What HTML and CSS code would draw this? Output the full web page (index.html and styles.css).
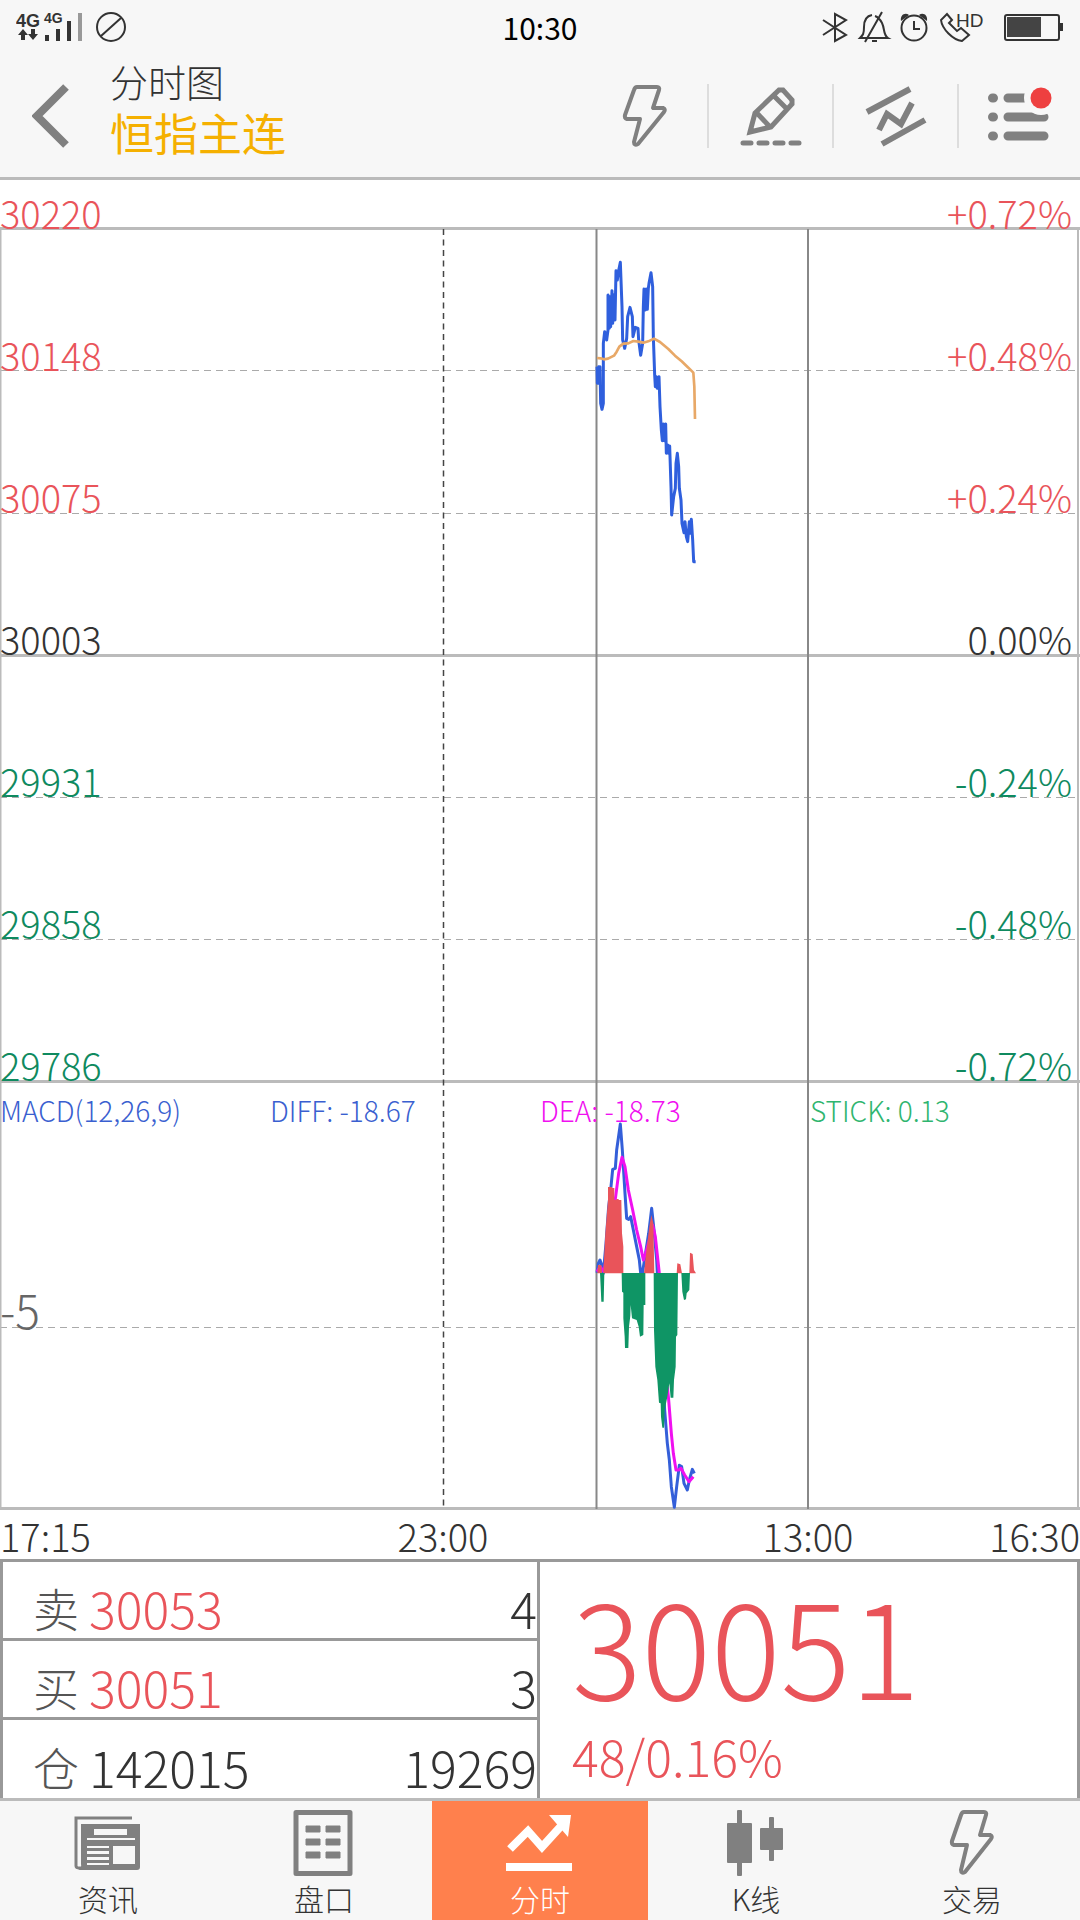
FILE: index.html
```html
<!DOCTYPE html>
<html lang="zh-CN">
<head>
    <meta charset="UTF-8">
    <meta name="viewport" content="width=device-width, initial-scale=1.0">
    <title>分时图</title>
    <link rel="stylesheet" href="styles.css">
</head>
<body>
    <div class="status">
        <svg class="signal" width="116" height="34" viewBox="0 0 116 34">
            <text class="net1" x="0" y="17">4G</text>
            <text class="net2" x="28" y="13">4G</text>
            <path d="M7 19l5 6h-3v5h-4v-5h-3zM17 30l-5-6h3v-5h4v5h3z" fill="#333"/>
            <path d="M29 25h4v6h-4zM40 19h4v12h-4zM51 11h4v20h-4z" fill="#333"/>
            <path d="M62 3h4v28h-4z" fill="#999"/>
            <circle cx="95" cy="17" r="14" fill="none" stroke="#333" stroke-width="2"/>
            <path d="M105 8L85 26" stroke="#333" stroke-width="2"/>
        </svg>
        <span class="clock">10:30</span>
        <svg class="sysicons" width="244" height="34" viewBox="0 0 244 34" fill="none" stroke="#333" stroke-width="2">
            <path d="M3 10l23 15-11 6V4l11 6L3 25"/>
            <path d="M42 28h26c-5-3-3-9-6-15-2-4-4-6-7-7M52 5c-6 1-8 6-8 12 0 7-1 8-4 11h6M62 2L45 32M52 31h5"/>
            <circle cx="94" cy="18" r="12.500"/>
            <path d="M94 11v8h6"/>
            <path d="M81 11c-1-6 4-9 8-6zM107 11c1-6-4-9-8-6z" fill="#333" stroke="none"/>
            <path d="M127 4l-6 6c1 9 12 20 21 21l7-6-8-7-4 3-8-8 3-3z"/>
            <text class="hd" x="136" y="17">HD</text>
            <rect x="185" y="5" width="54" height="25" rx="2"/>
            <path d="M187 7h34v20h-34z" fill="#444" stroke="none"/>
            <path d="M240 13h3v8h-3z" fill="#333" stroke="none"/>
        </svg>
    </div>

    <div class="header">
        <button class="back" aria-label="返回">
            <svg width="40" height="64" viewBox="0 0 40 64"><path d="M34 3L5 32l29 29" fill="none" stroke="#808080" stroke-width="8"/></svg>
        </button>
        <div class="title">
            <h1>分时图</h1>
            <p>恒指主连</p>
        </div>
        <div class="tools">
            <button aria-label="闪电下单">
                <svg width="64" height="64" viewBox="0 0 64 64"><path d="M24 3h20q3 0 2 3l-6 18h10q3 1 1 4L25 60q-4 2-4-2l6-23H14q-3-1-2-4l9-25q1-3 3-3z" fill="none" stroke="#808080" stroke-width="4" stroke-linejoin="round"/></svg>
            </button>
            <button aria-label="画线">
                <svg width="64" height="64" viewBox="0 0 64 64">
                    <path d="M11 48l5-19L40 6h4l9 10v4L32 43zM35 12l14 14M17 28l14 15" fill="none" stroke="#808080" stroke-width="5"/>
                    <path d="M4 59h8M20 59h8M36 59h8M52 59h8" stroke="#808080" stroke-width="5" stroke-linecap="round"/>
                </svg>
            </button>
            <button aria-label="指标">
                <svg width="64" height="64" viewBox="0 0 64 64"><path d="M3 28L46 5M18 60l43-24M15 46l8-16 14 10L48 19" fill="none" stroke="#808080" stroke-width="6"/></svg>
            </button>
            <button aria-label="菜单">
                <svg width="64" height="64" viewBox="0 0 64 64">
                    <path d="M4.500 14h1M4.500 33h1M4.500 52h1M20 14h16M20 33h36M20 52h36" stroke="#808080" stroke-width="9" stroke-linecap="round"/>
                    <circle cx="53" cy="14" r="17" fill="#f7f7f7"/>
                    <circle cx="53" cy="14" r="10.500" fill="#ee4040"/>
                </svg>
            </button>
        </div>
    </div>

    <div class="chart">
        <svg class="plot" viewBox="0 0 1080 1330" preserveAspectRatio="none">
            <!-- 网格 -->
            <g stroke="#aaa" stroke-width="1" stroke-dasharray="7 5">
                <path d="M0 190.500h1078M0 333.500h1078M0 617.500h1078M0 759.500h1078M0 1147.500h1078"/>
            </g>
            <path d="M0 48.500h1080M0 475.500h1080M0 901.500h1080M0 1328.500h1080" stroke="#bbb" stroke-width="3"/>
            <path d="M.500 49v1280M1078 49v1280" stroke="#bbb" stroke-width="2"/>
            <path d="M443.500 49v1280" stroke="#444" stroke-width="1.500" stroke-dasharray="6 4.500"/>
            <path d="M596.500 49v1280M808 49v1280" stroke="#888" stroke-width="2"/>
            <!-- 价格线、均价线 -->
            <svg x="580" y="60" width="140" height="340" viewBox="0 0 420 1020" fill="none" stroke-linejoin="round">
                <path d="M51 380L52 430 56 380 58 430 60 380 62 490 66 508 70 490 70 310 74 275 80 300 84 270 84 165 88 265 90 170 92 260 96 152 98 250 101 165 105 240 108 92 112 120 116 92 121 67 126 200 128 300 134 325 140 295 143 230 150 202 157 230 159 290 166 262 174 265 176 300 182 346 188 310 190 200 192 147 196 210 199 147 202 208 205 145 207 130 213 98 218 140 220 290 224 405 226 440 229 410 232 445 237 410 240 500 244 570 247 602 250 552 253 602 257 552 259 640 263 615 266 640 269 618 273 740 275 825 281 770 286 745 288 670 292 640 296 680 298 745 303 780 306 850 312 878 315 845 319 890 323 905 328 845 331 880 334 838 338 900 341 965 347 965" stroke="#2f5fdd" stroke-width="9"/>
                <path d="M51 354L62 355 72 358 84 356 102 347 110 335 118 320 130 311 145 310 160 303 175 305 190 308 205 304 222 296 240 306 265 327 285 347 305 364 325 383 340 398 343 440 345 537" stroke="#e8a867" stroke-width="8"/>
            </svg>
            <!-- MACD -->
            <svg x="580" y="920" width="140" height="420" viewBox="0 0 420 1260" fill="none" stroke-linejoin="round">
                <path d="M51 518L55 490 60 480 65 495 70 520 78 430 86 320 92 270 98 208 106 205 110 150 121 72 127 150 135 280 140 355 146 358 152 350 160 390 170 440 178 480 184 540 195 470 206 400 215 325 222 390 230 480 236 600 254 930 262 1030 268 1080 274 1160 283 1222 290 1160 298 1096 305 1100 312 1150 322 1170 328 1140 337 1108 343 1120" stroke="#345fd9" stroke-width="9"/>
                <path d="M51 515L60 500 72 515 88 420 106 297 116 220 126 172 135 200 145 270 158 330 170 390 182 440 190 480 197 460 208 420 218 375 226 410 238 520 262 860 266 900 274 1000 280 1060 288 1110 296 1110 303 1105 314 1125 327 1145 340 1130" stroke="#f010f0" stroke-width="9"/>
                <path d="M70 520L72 480 76 400 80 350 84 300V261H96V264H103V300H109V297H116V300H124L126 400 130 440V520zM192 520L196 480 202 430 208 380 214 345 220 370 223 520zM290 520L292 490 301 493 306 520zM328 520L330 458 338 462 342 510 348 520zM52 520L54 495 64 495 66 520z" fill="#e9545a"/>
                <path d="M60 519L62 560 64 605H71L73 519zM125 519L126 575 130 578V655L134 710 135 744H145L147 680 151 647 152 615 156 655 170 660 176 680 180 710 190 705 191 615H196V519zM221 519L222 690 226 800 232 840 237 908 242 910 243 950 247 983H252L254 930 262 890 268 850 272 893H280L282 840 287 800 288 710 292 705 294 519zM304 519L307 575 312 600 318 598 320 580 328 570 330 519z" fill="#0f9565"/>
            </svg>
        </svg>

        <div class="scale first up"><span>30220</span><span>+0.72%</span></div>
        <div class="scale up"><span>30148</span><span>+0.48%</span></div>
        <div class="scale up"><span>30075</span><span>+0.24%</span></div>
        <div class="scale"><span>30003</span><span>0.00%</span></div>
        <div class="scale down"><span>29931</span><span>-0.24%</span></div>
        <div class="scale down"><span>29858</span><span>-0.48%</span></div>
        <div class="scale down"><span>29786</span><span>-0.72%</span></div>

        <div class="macd">
            <div class="legend">
                <span class="blue">MACD(12,26,9)</span>
                <span class="blue">DIFF: -18.67</span>
                <span class="pink">DEA: -18.73</span>
                <span class="green">STICK: 0.13</span>
            </div>
            <div class="level">-5</div>
        </div>
    </div>

    <div class="times">
        <span>17:15</span>
        <span class="t2">23:00</span>
        <span class="t3">13:00</span>
        <span class="t4">16:30</span>
    </div>

    <div class="quote">
        <table class="orders">
            <tr><th>卖</th><td class="up">30053</td><td class="vol">4</td></tr>
            <tr><th>买</th><td class="up">30051</td><td class="vol">3</td></tr>
            <tr><th>仓</th><td>142015</td><td class="vol">19269</td></tr>
        </table>
        <div class="last up">
            <div class="price">30051</div>
            <div class="change">48/0.16%</div>
        </div>
    </div>

    <nav class="tabs">
        <a href="#news">
            <svg width="72" height="72" viewBox="0 0 72 72">
                <path d="M60 12H4v48q0 2 4 2h6" fill="none" stroke="#808080" stroke-width="3"/>
                <path d="M9 18h59v43q0 3-3 3H6q4-2 3-6z" fill="#808080"/>
                <path d="M22 23h33v6H22zM15 32h48v2H15zM41 40h22v18H41zM15 40h22v2H15zM15 45h22v3H15zM15 51h22v3H15zM15 57h22v2H15z" fill="#f7f7f7"/>
            </svg>
            <span>资讯</span>
        </a>
        <a href="#depth">
            <svg width="72" height="72" viewBox="0 0 72 72">
                <rect x="8" y="6.500" width="54" height="61" fill="none" stroke="#808080" stroke-width="5" stroke-linejoin="round"/>
                <path d="M18 20h14v6H18zM38 20h14v6H38zM18 33h14v6H18zM38 33h14v6H38zM18 46h14v6H18zM38 46h14v6H38z" fill="#808080" stroke="#808080" stroke-width="1" stroke-linejoin="round"/>
            </svg>
            <span>盘口</span>
        </a>
        <a class="active" href="#time">
            <svg width="72" height="72" viewBox="0 0 72 72">
                <path d="M6 43l18-18 14 16 20-22" fill="none" stroke="#fff" stroke-width="8"/>
                <path d="M45 9h22l-3 22zM2 57h66v8H2z" fill="#fff"/>
            </svg>
            <span>分时</span>
        </a>
        <a href="#kline">
            <svg width="72" height="72" viewBox="0 0 72 72" fill="#808080">
                <rect x="7" y="17" width="25" height="40" rx="1"/>
                <rect x="17" y="4" width="5" height="66" rx="1"/>
                <rect x="40" y="22" width="23" height="22" rx="1"/>
                <rect x="49" y="11" width="5" height="44" rx="1"/>
            </svg>
            <span>K线</span>
        </a>
        <a href="#trade">
            <svg width="72" height="72" viewBox="0 0 72 72"><path d="M28 6h20q3 0 2 3l-6 20h10q3 1 1 4L29 66q-4 2-4-2l6-25H18q-3-1-2-4l9-26q1-3 3-3z" fill="none" stroke="#808080" stroke-width="4" stroke-linejoin="round"/></svg>
            <span>交易</span>
        </a>
    </nav>
</body>
</html>
```
FILE: styles.css
```css
body,h1,p{
    margin: 0;
}
body{
    background-color: #fff;
    color: #333;
    font-family: "Noto Sans CJK SC", sans-serif;
    font-weight: 300;
}
button{
    padding: 0;
    border: 0;
    background: none;
}
svg{
    display: block;
}
.up{
    color: #e9545a;
}
.down{
    color: #0f8a5f;
}

/* 状态栏 */
.status{
    display: grid;
    grid-template-columns: 1fr auto 1fr;
    align-items: center;
    height: 54px;
    padding: 0 16px;
    background-color: #f7f7f7;
}
.net1,.net2{
    font-family: "Liberation Sans", sans-serif;
    font-weight: bold;
    font-size: 18px;
    fill: #333;
}
.net2{
    font-size: 14px;
}
.hd{
    font-family: "Liberation Sans", sans-serif;
    font-weight: normal;
    font-size: 19px;
    fill: #333;
    stroke: none;
}
.clock{
    color: #000;
    font-size: 30px;
    line-height: 50px;
    font-weight: 400;
}
.sysicons{
    justify-self: end;
}

/* 标题栏 */
.header{
    display: flex;
    align-items: center;
    height: 123px;
    border-bottom: 3px solid #bbb;
    background-color: #f7f7f7;
}
.back{
    width: 110px;
    padding-left: 32px;
}
.title{
    flex: 1;
    padding-bottom: 20px;
}
.title h1{
    font-size: 38px;
    line-height: 52px;
    font-weight: 300;
}
.title p{
    color: #f5b000;
    font-size: 44px;
    line-height: 50px;
    font-weight: 400;
}
.tools{
    display: flex;
}
.tools button{
    display: flex;
    justify-content: center;
    width: 125px;
}
.tools button+button{
    border-left: 2px solid #ddd;
}
.tools button:last-child{
    width: 123px;
}

/* 走势图 */
.chart{
    position: relative;
}
.plot{
    position: absolute;
    top: 0;
    left: 0;
    width: 100%;
    height: 100%;
}
.scale{
    position: relative;
    display: flex;
    justify-content: space-between;
    align-items: flex-end;
    height: 142px;
    padding-right: 8px;
    font-size: 38px;
    line-height: 34px;
}
.first{
    height: 50px;
}
.macd{
    position: relative;
    height: 428px;
}
.legend{
    display: grid;
    grid-template-columns: repeat(4, 1fr);
    padding-top: 8px;
    font-size: 28px;
    line-height: 40px;
}
.blue{
    color: #3a5fd0;
}
.pink{
    color: #f010f0;
}
.green{
    color: #2fb56f;
}
.level{
    padding-top: 159px;
    color: #666;
    font-size: 46px;
    line-height: 40px;
}
.times{
    display: grid;
    grid-template-columns: 343fr 200fr 165fr 200fr 172fr;
    height: 49px;
    font-size: 38px;
    line-height: 52px;
}
.t2{
    text-align: center;
}
.t3{
    grid-column: 4;
    text-align: center;
}
.t4{
    text-align: right;
}

/* 报价 */
.quote{
    display: grid;
    grid-template-columns: 1fr 1fr;
    border-bottom: 3px solid #bbb;
}
.orders{
    width: 100%;
    border-collapse: collapse;
}
.orders tr{
    height: 79px;
    border: 3px solid #999;
    border-bottom: 0;
}
.orders th,.orders td{
    padding: 14px 0 0;
    text-align: left;
    font-size: 50px;
    line-height: 60px;
    font-weight: 300;
}
.orders th{
    width: 56px;
    padding-left: 30px;
    color: #555;
    font-size: 46px;
}
.orders .vol{
    text-align: right;
}
.last{
    padding-left: 32px;
    border-top: 3px solid #999;
    border-right: 3px solid #999;
}
.price{
    padding-top: 16px;
    font-size: 130px;
    line-height: 130px;
}
.change{
    padding-top: 12px;
    font-size: 50px;
    line-height: 70px;
}

/* 底部菜单 */
.tabs{
    display: grid;
    grid-template-columns: repeat(5, 1fr);
    background-color: #f7f7f7;
}
.tabs a{
    display: flex;
    flex-direction: column;
    align-items: center;
    height: 115px;
    padding-top: 5px;
    color: #333;
    font-size: 30px;
    line-height: 40px;
    text-decoration: none;
}
.tabs .active{
    background-color: #ff804d;
    color: #fff;
}
```
